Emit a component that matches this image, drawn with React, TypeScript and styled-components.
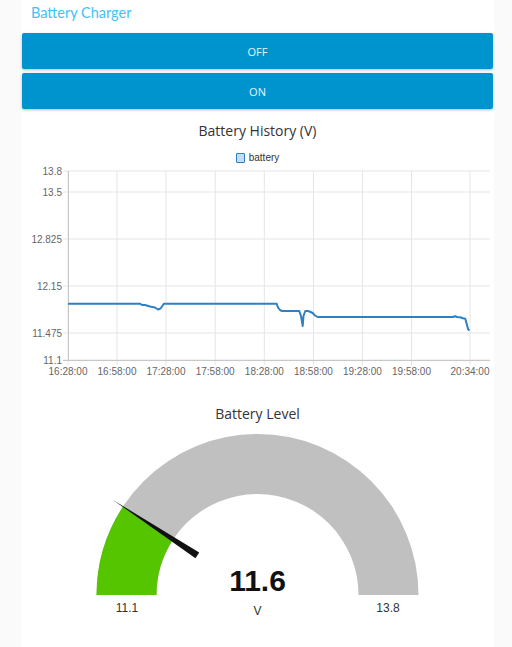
import React from "react";
import styled, { createGlobalStyle } from "styled-components";

const Global = createGlobalStyle`
  html, body { margin: 0; padding: 0; background: #fafafa; }
  body { font-family: "Open Sans", "Noto Sans", sans-serif; }
`;

const Page = styled.div`
  display: flex;
  padding-left: 21px;
  min-height: 647px;
`;

const Card = styled.div`
  width: 473px;
  background: #ffffff;
  display: flex;
  flex-direction: column;
`;

const Header = styled.div`
  height: 33px;
  padding-left: 10px;
  display: flex;
  align-items: flex-start;
  font-family: Lato, "Open Sans", sans-serif;
  font-size: 14.5px;
  line-height: 25px;
  color: #41c3f6;
`;

const ButtonGroup = styled.div`
  display: flex;
  flex-direction: column;
  gap: 4px;
  padding: 0 1px;
`;

const SwitchButton = styled.button`
  height: 36px;
  border: none;
  border-radius: 2px;
  background: #0094ce;
  color: #e6f5fc;
  font-family: "Open Sans", "Noto Sans", sans-serif;
  font-size: 11px;
  box-shadow: 0 1px 3px rgba(0, 0, 0, 0.28);
  cursor: pointer;
`;

const Section = styled.div<{ $top: number }>`
  display: flex;
  flex-direction: column;
  align-items: center;
  padding-top: ${(p) => p.$top}px;
`;

const Title = styled.div`
  height: 20px;
  line-height: 20px;
  font-size: 14px;
  color: #333;
`;

const Legend = styled.div`
  margin-top: 10px;
  height: 13px;
  display: flex;
  align-items: center;
  gap: 4px;
  font-family: "Liberation Sans", Arial, sans-serif;
  font-size: 10px;
  color: #333;
`;

const Swatch = styled.span`
  width: 7px;
  height: 8px;
  border: 1.5px solid #2f80c3;
  background: #c5dcf0;
  border-radius: 1px;
`;

const Svg = styled.svg`
  display: block;
  font-family: "Liberation Sans", Arial, sans-serif;
`;

const yTicks: [string, number][] = [
  ["13.8", 170],
  ["13.5", 191],
  ["12.825", 238],
  ["12.15", 285],
  ["11.475", 332],
  ["11.1", 359],
];

const xTicks: [string, number][] = [
  ["16:28:00", 68],
  ["16:58:00", 117],
  ["17:28:00", 166],
  ["17:58:00", 215.2],
  ["18:28:00", 264.3],
  ["18:58:00", 313.4],
  ["19:28:00", 362.4],
  ["19:58:00", 411.5],
  ["20:34:00", 470],
];

const linePts: [number, number][] = [
  [68, 302.7], [140, 302.7], [142, 304], [145, 304], [150, 305.5], [155, 306.5],
  [158, 308.5], [160.5, 307.5], [164, 302.7], [276.7, 302.7], [278, 306.5],
  [280, 309], [282, 310], [299.3, 310], [301, 315], [302.7, 325], [303.5, 315],
  [305.3, 310], [308, 310], [310.5, 311], [312.7, 312], [315, 314.5], [317.7, 316],
  [453, 316], [455, 315.2], [457, 316], [460, 316.3], [463, 317.3], [465.3, 317.7],
  [467, 324], [468.2, 328.5], [469.5, 329.5],
];

const HistoryChart = () => (
  <Svg width={473} height={220} viewBox="0 0 473 220">
    <g transform="translate(-21,-163)">
      {yTicks.map(([l, y]) => (
        <g key={l}>
          <line x1={63} x2={490} y1={y} y2={y} stroke="#e5e5e5" strokeWidth={1} />
          <text x={62} y={y + 3.5} fontSize={10} fill="#666" textAnchor="end">
            {l}
          </text>
        </g>
      ))}
      {xTicks.map(([l, x]) => (
        <g key={l}>
          <line x1={x} x2={x} y1={170} y2={364} stroke="#e5e5e5" strokeWidth={1} />
          <text x={x} y={374} fontSize={10} fill="#666" textAnchor="middle">
            {l}
          </text>
        </g>
      ))}
      <line x1={68.5} x2={68.5} y1={170} y2={359} stroke="#c8c8c8" />
      <line x1={63} x2={490} y1={359.5} y2={359.5} stroke="#c8c8c8" />
      <polyline
        points={linePts.map((p) => p.join(",")).join(" ")}
        fill="none"
        stroke="#2f80c3"
        strokeWidth={2}
        strokeLinejoin="round"
      />
    </g>
  </Svg>
);

const cx = 257.5;
const cy = 599;
const R = 161;
const r = 101;
const minV = 11.1;
const maxV = 13.8;
const value = 11.6;

const pt = (rad: number, ang: number) =>
  `${(cx - rad * Math.cos(ang)).toFixed(2)},${(cy - rad * Math.sin(ang)).toFixed(2)}`;

const Gauge = () => {
  const a = ((value - minV) / (maxV - minV)) * Math.PI;
  const ux = -Math.cos(a);
  const uy = -Math.sin(a);
  const px = -uy;
  const py = ux;
  const tip = [cx + ux * 173, cy + uy * 173];
  const base = [cx + ux * 72, cy + uy * 72];
  const w = 3.4;
  const needle = [
    `${tip[0]},${tip[1]}`,
    `${base[0] + px * w},${base[1] + py * w}`,
    `${base[0] - px * w},${base[1] - py * w}`,
  ].join(" ");
  return (
    <Svg width={473} height={209} viewBox="0 0 473 209">
      <g transform="translate(-21,-428)">
        <path
          d={`M ${pt(R, 0)} A ${R} ${R} 0 0 1 ${pt(R, Math.PI)} L ${pt(r, Math.PI)} A ${r} ${r} 0 0 0 ${pt(r, 0)} Z`}
          fill="#c0c0c0"
        />
        <path
          d={`M ${pt(R, 0)} A ${R} ${R} 0 0 1 ${pt(R, a)} L ${pt(r, a)} A ${r} ${r} 0 0 0 ${pt(r, 0)} Z`}
          fill="#55c500"
        />
        <polygon points={needle} fill="#111" />
        <text x={cx} y={595} fontSize={30} fontWeight="bold" fill="#111" textAnchor="middle">
          11.6
        </text>
        <text x={cx} y={619} fontSize={12} fill="#333" textAnchor="middle">
          V
        </text>
        <text x={127} y={616} fontSize={12} fill="#333" textAnchor="middle">
          11.1
        </text>
        <text x={388} y={616} fontSize={12} fill="#333" textAnchor="middle">
          13.8
        </text>
      </g>
    </Svg>
  );
};

export default function App() {
  return (
    <>
      <Global />
      <Page>
        <Card>
          <Header>Battery Charger</Header>
          <ButtonGroup>
            <SwitchButton>OFF</SwitchButton>
            <SwitchButton>ON</SwitchButton>
          </ButtonGroup>
          <Section $top={12}>
            <Title>Battery History (V)</Title>
            <Legend>
              <Swatch />
              battery
            </Legend>
            <HistoryChart />
          </Section>
          <Section $top={20}>
            <Title>Battery Level</Title>
            <Gauge />
          </Section>
        </Card>
      </Page>
    </>
  );
}
